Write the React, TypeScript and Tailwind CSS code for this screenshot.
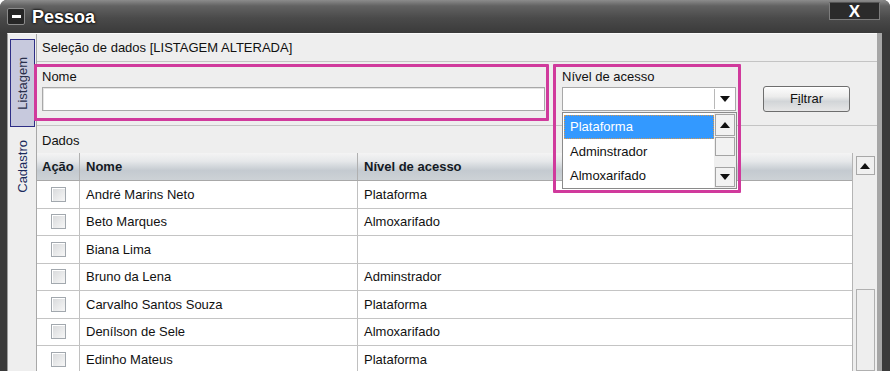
import React from "react";

const rows: [string, string][] = [
  ["André Marins Neto", "Plataforma"],
  ["Beto Marques", "Almoxarifado"],
  ["Biana Lima", ""],
  ["Bruno da Lena", "Adminstrador"],
  ["Carvalho Santos Souza", "Plataforma"],
  ["Denílson de Sele", "Almoxarifado"],
  ["Edinho Mateus", "Plataforma"],
  ["Fábio Nunes", "Adminstrador"],
];

function Up() {
  return (
    <svg width="10" height="6" viewBox="0 0 10 6">
      <polygon points="0,6 10,6 5,0" fill="#111" />
    </svg>
  );
}
function Down() {
  return (
    <svg width="10" height="6" viewBox="0 0 10 6">
      <polygon points="0,0 10,0 5,6" fill="#111" />
    </svg>
  );
}

function Check() {
  return (
    <div className="w-[15px] h-[15px] border border-[#a2a8ae] bg-[linear-gradient(135deg,#d6d8da,#f7f7f7)] shadow-[inset_1px_1px_0_#fff]" />
  );
}

export default function App() {
  return (
    <div className="w-[890px] h-[371px] bg-white overflow-hidden font-['Liberation_Sans',Arial,sans-serif] text-[13px] text-[#111]">
      <div className="h-full rounded-t-[7px] bg-[#3a3a3a] flex flex-col">
        {/* title bar */}
        <div className="h-[33px] shrink-0 rounded-t-[7px] bg-[linear-gradient(to_bottom,#8c8c8c_0%,#626262_18%,#4a4a4a_55%,#3a3a3a_100%)] flex items-start relative">
          <div className="ml-[7px] mt-[8px] w-[18px] h-[17px] rounded-[2px] bg-[#262626] border border-[#8a8a8a] flex items-center justify-center">
            <div className="w-[9px] h-[3px] bg-white" />
          </div>
          <div className="ml-[7px] mt-[6px] text-[18px] font-bold text-white leading-[22px] [text-shadow:0_0_3px_#000,0_0_2px_#000]">
            Pessoa
          </div>
          <div className="absolute left-[829px] top-[2px] w-[51px] h-[18px] bg-[#2b2b2b] border border-[#7c7c7c] border-t-[#555] flex items-center justify-center text-white font-bold text-[17px] leading-none">
            X
          </div>
        </div>

        {/* body */}
        <div className="flex-1 flex pl-[7px] min-h-0">
          <div className="flex-1 flex bg-[#eeeeee] border-l border-[#9c9c9c] border-t border-t-[#fafafa] min-w-0">
            {/* tabs */}
            <div className="w-[29px] shrink-0 border-r border-[#a8a8a8] pl-[2px] pt-[5px] flex flex-col">
              <div className="w-[25px] h-[88px] border border-[#2e2e86] bg-[#c7c9dd] flex items-center justify-center">
                <span className="[writing-mode:vertical-rl] rotate-180 text-[13px] text-[#2a2f4a] leading-none">Listagem</span>
              </div>
              <div className="w-[25px] h-[78px] flex items-center justify-center">
                <span className="[writing-mode:vertical-rl] rotate-180 text-[13px] text-[#1b2a5c] leading-none">Cadastro</span>
              </div>
            </div>

            {/* content */}
            <div className="flex-1 flex flex-col min-w-0">
              <div className="h-[28px] shrink-0 border-b border-[#c4c4c4] pl-[5px] flex items-center">
                Seleção de dados [LISTAGEM ALTERADA]
              </div>

              {/* filter row */}
              <div className="h-[64px] shrink-0 border-b border-[#c4c4c4] pl-[5px] flex relative z-20">
                <div className="w-[503px] pt-[6px]">
                  <div className="h-[17px] leading-[17px]">Nome</div>
                  <div className="mt-[2px] h-[24px] bg-white border border-[#a8a8a8] shadow-[inset_1px_1px_0_#e4e4e4]" />
                </div>
                <div className="ml-[17px] w-[174px] pt-[6px]">
                  <div className="h-[17px] leading-[17px]">Nível de acesso</div>
                  <div className="mt-[2px] h-[24px] bg-white border border-[#a8a8a8] flex justify-end relative">
                    <div className="w-[20px] my-[1px] mr-[1px] border-l border-[#b8b8b8] flex items-center justify-center">
                      <Down />
                    </div>
                    {/* dropdown list */}
                    <div className="absolute left-[-1px] top-[24px] w-[175px] h-[77px] bg-white border border-[#8a8a8a] flex">
                      <div className="flex-1 flex flex-col pt-[2px] pl-[1px]">
                        <div className="h-[24px] bg-[#3399ff] text-white border border-dotted border-[#d89a50] pl-[5px] flex items-center">
                          Plataforma
                        </div>
                        <div className="h-[25px] pl-[6px] flex items-center">Adminstrador</div>
                        <div className="h-[24px] pl-[6px] flex items-center">Almoxarifado</div>
                      </div>
                      <div className="w-[22px] bg-[#efefef] flex flex-col items-center pt-[1px]">
                        <div className="w-[20px] h-[22px] border border-[#a4a4a4] bg-[#f2f2f2] flex items-center justify-center">
                          <Up />
                        </div>
                        <div className="w-[20px] h-[19px] mt-[1px] border border-[#a4a4a4] bg-[#f2f2f2]" />
                        <div className="flex-1" />
                        <div className="w-[20px] h-[20px] mb-[1px] border border-[#a4a4a4] bg-[#f2f2f2] flex items-center justify-center">
                          <Down />
                        </div>
                      </div>
                    </div>
                  </div>
                </div>
                <div className="ml-[27px] mt-[24px] w-[87px] h-[26px] rounded-[3px] border border-[#6e6e6e] bg-[linear-gradient(to_bottom,#fdfdfd_0%,#ececec_40%,#d2d5d8_60%,#e6e6e6_100%)] shadow-[inset_0_1px_0_#fff] flex items-center justify-center">
                  <span>
                    F<span className="underline">i</span>ltrar
                  </span>
                </div>

                {/* highlight boxes */}
                <div className="absolute left-[-3px] top-[2px] w-[515px] h-[57px] border-[3px] border-[#d03a9c] rounded-[1px] pointer-events-none" />
                <div className="absolute left-[516px] top-[2px] w-[188px] h-[129px] border-[3px] border-[#d03a9c] rounded-[1px] pointer-events-none" />
              </div>

              <div className="h-[27px] shrink-0 pl-[5px] pt-[2px] flex items-center">Dados</div>

              {/* table */}
              <div className="flex-1 flex min-h-0">
                <div className="w-[816px] shrink-0 bg-white border-r border-[#b4b4b4] overflow-hidden">
                  <div className="h-[28px] flex border-b border-[#a8a8a8] bg-[linear-gradient(to_bottom,#f4f4f4_0%,#e6e8ea_30%,#c4cad0_65%,#cdd2d6_100%)] font-bold text-[#141a24]">
                    <div className="w-[43px] border-r border-[#b0b0b0] pl-[5px] flex items-center">Ação</div>
                    <div className="w-[278px] border-r border-[#b0b0b0] pl-[6px] flex items-center">Nome</div>
                    <div className="flex-1 pl-[6px] flex items-center">Nível de acesso</div>
                  </div>
                  {rows.map(([n, l], i) => (
                    <div key={i} className="h-[27.5px] flex border-b border-[#c4c4c4]">
                      <div className="w-[43px] border-r border-[#c0c0c0] flex items-center justify-center">
                        <Check />
                      </div>
                      <div className="w-[278px] border-r border-[#c0c0c0] pl-[6px] flex items-center">{n}</div>
                      <div className="flex-1 pl-[6px] flex items-center">{l}</div>
                    </div>
                  ))}
                </div>
                {/* scrollbar */}
                <div className="w-[24px] shrink-0 bg-[#eeeeee] flex flex-col items-center pt-[3px]">
                  <div className="w-[19px] h-[19px] border border-[#a8a8a8] bg-[#f0f0f0] flex items-center justify-center">
                    <Up />
                  </div>
                  <div className="h-[114px] shrink-0" />
                  <div className="w-[19px] flex-1 border border-[#b0b0b0] bg-[#eeeeee]" />
                </div>
              </div>
            </div>
          </div>
          <div className="w-[5px] bg-[#a6a6a6]" />
          <div className="w-[8px]" />
        </div>
      </div>
    </div>
  );
}
